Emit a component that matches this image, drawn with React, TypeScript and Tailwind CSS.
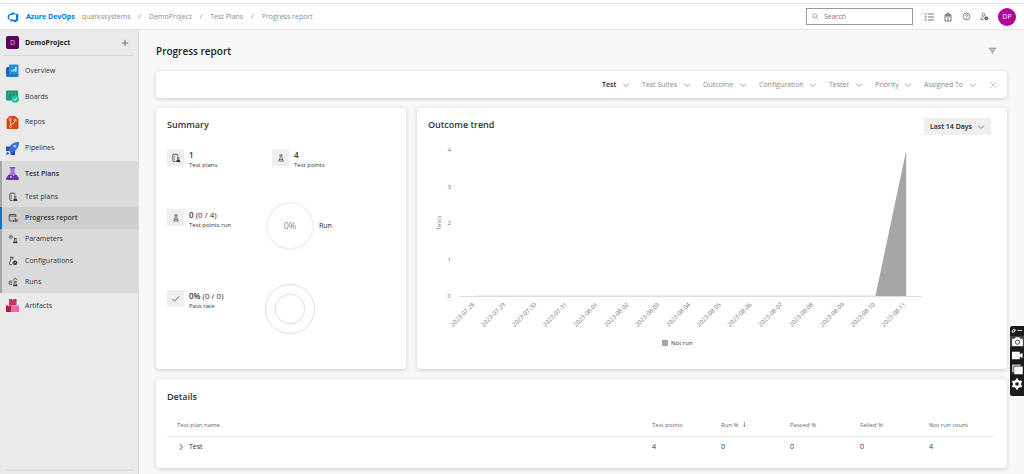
import { useState } from "react";
import type { ReactNode } from "react";

const DATES = [
  "2023-07-28",
  "2023-07-29",
  "2023-07-30",
  "2023-07-31",
  "2023-08-01",
  "2023-08-02",
  "2023-08-03",
  "2023-08-04",
  "2023-08-05",
  "2023-08-06",
  "2023-08-07",
  "2023-08-08",
  "2023-08-09",
  "2023-08-10",
  "2023-08-11",
];
const NOT_RUN = [0, 0, 0, 0, 0, 0, 0, 0, 0, 0, 0, 0, 0, 0, 4];

const FILTERS = ["Test", "Test Suites", "Outcome", "Configuration", "Tester", "Priority", "Assigned To"];

const CARD = "rounded-sm bg-white shadow-[0_1px_4px_rgba(0,0,0,0.18)]";

function Chevron({ className = "" }: { className?: string }) {
  return (
    <svg viewBox="0 0 8 8" className={`size-2 fill-none stroke-current ${className}`} strokeWidth="0.8">
      <path d="M1 2.5 4 5.5 7 2.5" />
    </svg>
  );
}

function Line({ children, className = "size-[10px]" }: { children: ReactNode; className?: string }) {
  return (
    <svg viewBox="0 0 10 10" className={`shrink-0 fill-none stroke-current ${className}`} strokeWidth="0.8">
      {children}
    </svg>
  );
}

function PlanIcon() {
  return (
    <Line>
      <path d="M4.5 8.5H2.6Q1.8 8.5 1.8 7.7V2Q1.8 1.2 2.6 1.2H6Q6.8 1.2 6.8 2V3.2" />
      <path d="M3 3.2h.8M3 5h.8M3 6.8h.8" />
      <path d="M6 4.4h2.4M6.7 4.4v1.8L5.6 8.6h3.4L7.8 6.2V4.4" strokeWidth="0.6" />
      <path d="M6.3 7 5.6 8.6H9L8.2 7z" className="fill-current" strokeWidth="0.6" />
    </Line>
  );
}

function ReportIcon() {
  return (
    <Line>
      <path d="M4.5 8H2Q1.2 8 1.2 7.2V2.2Q1.2 1.4 2 1.4H7Q7.8 1.4 7.8 2.2V4M1.2 3H7.8" />
      <path d="M5.5 9V7M7.2 9V5M8.9 9V6.2" strokeWidth="1" />
    </Line>
  );
}

function ParamsIcon() {
  return (
    <Line>
      <circle cx="2.8" cy="2.8" r="1.7" strokeDasharray="1 0.4" />
      <circle cx="2.8" cy="2.8" r="0.5" />
      <path d="M5.8 4.4h2.8M6.5 4.4v1.8L5.2 8.8h4L8 6.2V4.4" strokeWidth="0.7" />
      <path d="M6 7.4 5.2 8.8h4L8.5 7.4z" className="fill-current stroke-none" />
    </Line>
  );
}

function ConfigIcon() {
  return (
    <Line>
      <path d="M2 1.2h3.5M2.8 1.2v2.3L1.4 7.5Q1.2 8.6 2.2 8.6H4M4.8 1.2v2.3" />
      <circle cx="7" cy="6.8" r="1.9" className="fill-current" />
      <circle cx="7" cy="6.8" r="0.6" className="fill-white stroke-none" />
    </Line>
  );
}

function RunsIcon() {
  return (
    <Line>
      <path d="M4.3 4H2.2Q1 4 1 5.8T2.2 7.6H4M2 5.8H4.4" />
      <path d="M5 3.2 7.2 1.2 9.2 2.6" />
      <path d="M5.8 4.4h2.8M6.5 4.4v1.8L5.2 8.8h4L8 6.2V4.4" strokeWidth="0.7" />
      <path d="M6 7.4 5.2 8.8h4L8.5 7.4z" className="fill-current stroke-none" />
    </Line>
  );
}

function FlaskIcon() {
  return (
    <Line className="size-2">
      <path d="M3 1.2h4M4 1.2v3.3L2 8.8h6L6 4.5V1.2M3 6.8h4" />
    </Line>
  );
}

function Badge({ children }: { children: ReactNode }) {
  return (
    <svg viewBox="0 0 13 13" className="size-[13px] shrink-0">
      {children}
    </svg>
  );
}

const OverviewIcon = (
  <Badge>
    <path d="M1.5 3H10v8q0 2-2 2H2q-2 0-2-2V4.5Q0 3 1.5 3z" fill="#1666b8" />
    <rect x="3" y="0.5" width="9.5" height="10" rx="1" fill="#2490e0" />
    <path d="M5 7.5V6.3h1.5v1.2zM7 7.5V5h1.5v2.5zM9 7.5V3h1.5v4.5z" fill="#cfe8ff" />
    <path d="M0 10h12.5v1.5q0 1.5-1.5 1.5H2q-2 0-2-3z" fill="#1b78c8" />
  </Badge>
);

const BoardsIcon = (
  <Badge>
    <rect x="0" y="0.5" width="12" height="10" rx="1" fill="#1f9476" />
    <path d="M1.5 2h2v2h-2zM5 2h2v2H5zM8.5 2h2v2h-2zM1.5 5.5h2v2h-2zM5 5.5h2v2H5z" fill="#31a685" />
    <circle cx="9.2" cy="9" r="3.8" fill="#1cc4a0" />
    <path d="M7.4 9l1.4 1.4L11 7.8" fill="none" stroke="#fff" />
  </Badge>
);

const ReposIcon = (
  <Badge>
    <path d="M4 0h5l3.5 3v9q0 1-1 1H1.5q-1 0-1-1V3z" fill="#d9480f" />
    <g fill="none" stroke="#ffe3d6" strokeWidth="0.8">
      <path d="M4.5 4.5v5M4.5 8.5Q8.6 8 8.8 5.2" />
      <circle cx="4.3" cy="3.5" r="1" />
      <circle cx="9" cy="4.2" r="1" />
      <circle cx="4.5" cy="10.5" r="1" />
    </g>
  </Badge>
);

const PipelinesIcon = (
  <Badge>
    <path d="M0 4.5h5v4.5H0zM4.5 8H9v5H4.5z" fill="#1f4fc0" />
    <path d="M13 0Q7.5-.2 4 4L2.5 8.5 4.8 10.6 9 9Q13 5.5 13 0z" fill="#3b6fe0" />
    <circle cx="8.8" cy="4.2" r="1.4" fill="#a9c6ff" />
    <path d="M0 13 1.2 9.5 3.7 11.8z" fill="#2b5fd6" />
  </Badge>
);

const TestPlansIcon = (
  <Badge>
    <path d="M4.5 1h4v4.2L12.6 11q.6 2-1.2 2H1.6Q-.2 13 .4 11L4.5 5.2z" fill="#a56fe0" />
    <path d="M2.4 8h8.2l2 3q.6 2-1.2 2H1.6Q-.2 13 .4 11z" fill="#6a2fb0" />
    <rect x="3.6" y="0" width="5.8" height="1.6" rx="0.6" fill="#8a4fd0" />
    <circle cx="5" cy="10" r="1" fill="#d9bdf7" />
    <circle cx="7.5" cy="8.5" r="0.7" fill="#d9bdf7" />
  </Badge>
);

const ArtifactsIcon = (
  <Badge>
    <rect x="3" y="0" width="7.5" height="6.5" fill="#cc2f74" />
    <rect x="0" y="6.5" width="5.5" height="6.5" fill="#b3144f" />
    <rect x="5.5" y="6.5" width="7.5" height="6.5" fill="#ec6aa4" />
    <path d="M8.5 6.5H10v1.8H8.5zM6 0h1.4v1.6H6zM2 6.5h1.4v1.6H2z" fill="#f7a5c8" opacity="0.6" />
  </Badge>
);

const SERVICES = [
  { label: "Overview", icon: OverviewIcon },
  { label: "Boards", icon: BoardsIcon },
  { label: "Repos", icon: ReposIcon },
  { label: "Pipelines", icon: PipelinesIcon },
];

const TEST_PAGES = [
  { label: "Test plans", icon: <PlanIcon /> },
  { label: "Progress report", icon: <ReportIcon />, active: true },
  { label: "Parameters", icon: <ParamsIcon /> },
  { label: "Configurations", icon: <ConfigIcon /> },
  { label: "Runs", icon: <RunsIcon /> },
];

function Header() {
  return (
    <header className="mt-[3px] flex h-[27px] items-center border-t border-b border-[#e4e4e4] bg-white pr-2 pl-[7px]">
      <a href="#" className="flex items-center gap-[7px] font-bold text-[#0078d4]">
        <svg viewBox="0 0 16 16" className="size-3 fill-[#0078d4]">
          <path d="M15 3.6v8.6L11.5 15l-5.4-2v2L3 11l9 .7V4zM12.1 4 7 1v2L2.4 4.4 1 6.2v4.1l2 .9V6.1z" />
        </svg>
        Azure DevOps
      </a>
      <nav className="ml-[7px] flex items-center gap-2 text-[#8a8a8a]">
        <a href="#">quarkssystems</a>
        <span>/</span>
        <a href="#">DemoProject</a>
        <span>/</span>
        <a href="#">Test Plans</a>
        <span>/</span>
        <a href="#">Progress report</a>
      </nav>
      <label className="ml-auto flex h-[17px] w-[107px] items-center gap-[5px] border border-[#999] px-[5px] text-[#666]">
        <Line className="size-[7px]">
          <circle cx="4" cy="4" r="2.8" />
          <path d="M6 6 9.3 9.3" />
        </Line>
        <input type="search" placeholder="Search" aria-label="Search" className="w-full outline-none placeholder:text-[#777]" />
      </label>
      <div className="ml-[11px] flex items-center gap-[9px] text-[#555]">
        <button aria-label="Work items">
          <Line>
            <path d="M4 2h6M4 5h6M4 8h6M.5 2l.8.7L2.8 1M.5 5l.8.7L2.8 4M.5 8l.8.7L2.8 7" />
          </Line>
        </button>
        <button aria-label="Marketplace">
          <Line>
            <path d="M2 3h6v6H2zM3.5 4.8V2Q5 0 6.5 2v2.8M5 1v8" />
          </Line>
        </button>
        <button aria-label="Help">
          <Line className="size-[9px]">
            <circle cx="5" cy="5" r="3.8" />
            <path d="M3.9 4.2Q4 3 5 3t1.1 1.1Q6.1 4.6 5 5.3V6M5 6.6v.8" />
          </Line>
        </button>
        <button aria-label="User settings">
          <Line className="size-[9px]">
            <circle cx="4" cy="2.8" r="1.6" />
            <path d="M4 8.6H1.2Q1 5.2 4 5.2" />
            <circle cx="7" cy="7" r="1.8" className="fill-current" />
            <circle cx="7" cy="7" r="0.6" className="fill-white stroke-none" />
          </Line>
        </button>
        <button className="flex size-[18px] items-center justify-center rounded-full bg-[#b4009e] text-white">DP</button>
      </div>
    </header>
  );
}

function Sidebar() {
  return (
    <aside className="flex w-[139px] shrink-0 flex-col border-r border-[#dcdcdc] bg-[#eaeaea] text-[#333]">
      <div className="mx-[5px] flex h-[26px] items-center border-b border-[#d8d8d8] px-px">
        <span className="flex size-[13px] items-center justify-center rounded-xs bg-[#5c005c] text-[#e8b8e8]">D</span>
        <span className="ml-[6px] font-bold text-[#222]">DemoProject</span>
        <button aria-label="Create" className="mr-[3px] ml-auto">
          <Line className="size-2">
            <path d="M5 1v8M1 5h8" />
          </Line>
        </button>
      </div>
      <nav className="pt-[2px]">
        <ul className="grid h-[103px] grid-rows-4">
          {SERVICES.map((s) => (
            <li key={s.label} className="flex">
              <a href="#" className="flex flex-1 items-center gap-[6px] pl-[6px]">
                {s.icon}
                {s.label}
              </a>
            </li>
          ))}
        </ul>
        <div className="border-l-2 border-[#a6a6a6] bg-[#dadada]">
          <a href="#" className="flex h-[25px] items-center gap-[6px] pl-1 font-semibold">
            {TestPlansIcon}
            Test Plans
          </a>
          <ul className="grid h-[107px] grid-rows-5">
            {TEST_PAGES.map((p) => (
              <li key={p.label} className="flex">
                <a
                  href="#"
                  className={`-ml-0.5 flex flex-1 items-center gap-[7px] border-l-2 pl-[6px] ${
                    p.active ? "border-[#0078d4] bg-[#cdcdcd] font-semibold" : "border-transparent"
                  }`}
                >
                  {p.icon}
                  {p.label}
                </a>
              </li>
            ))}
          </ul>
        </div>
        <a href="#" className="flex h-[25px] items-center gap-[6px] pl-[6px]">
          {ArtifactsIcon}
          Artifacts
        </a>
      </nav>
      <div className="mx-[5px] mt-auto mb-[3px] border-b-2 border-[#e0e0e0]" />
    </aside>
  );
}

function FilterBar() {
  return (
    <div className={`${CARD} flex h-[27px] items-center justify-end gap-3 pr-[10px]`}>
      {FILTERS.map((name, i) => (
        <label key={name} className={`relative flex items-center ${i === 0 ? "font-semibold text-[#222]" : "text-[#888]"}`}>
          <select aria-label={name} className="cursor-pointer appearance-none pr-[13px] outline-none">
            <option>{name}</option>
          </select>
          <Chevron className="pointer-events-none absolute right-0 text-[#888]" />
        </label>
      ))}
      <button aria-label="Clear filters" className="text-[#aaa]">
        <Line className="size-2">
          <path d="M1 1l8 8M9 1 1 9" />
        </Line>
      </button>
    </div>
  );
}

function Stat({ icon, value, detail, label }: { icon: ReactNode; value: string; detail?: string; label: string }) {
  return (
    <div className="flex gap-[5px] text-[#333]">
      <span className="flex size-[17px] items-center justify-center bg-[#efefef]">{icon}</span>
      <div>
        <p className="text-[8px] leading-[11px]">
          <span className="font-semibold">{value}</span> {detail}
        </p>
        <p className="text-[6px] leading-[11px]">{label}</p>
      </div>
    </div>
  );
}

function Summary() {
  return (
    <section className={`${CARD} w-[250px] shrink-0 p-[11px]`}>
      <h2 className="text-[9px] leading-3 font-semibold text-[#333]">Summary</h2>
      <div className="mt-[18px] flex h-[17px]">
        <div className="w-[105px]">
          <Stat icon={<PlanIcon />} value="1" label="Test plans" />
        </div>
        <Stat icon={<FlaskIcon />} value="4" label="Test points" />
      </div>
      <div className="mt-9 flex items-center">
        <div className="w-[99px] pb-3">
          <Stat icon={<FlaskIcon />} value="0" detail="(0 / 4)" label="Test points run" />
        </div>
        <div className="flex size-12 items-center justify-center rounded-full border-2 border-[#f2f2f2] text-[9px] text-[#888]">0%</div>
        <span className="ml-[5px]">Run</span>
      </div>
      <div className="mt-[34px] flex items-center">
        <div className="w-[98px] pb-4">
          <Stat
            icon={
              <Line className="size-[9px]">
                <path d="M1.5 5.5 4 8 8.8 2.6" />
              </Line>
            }
            value="0%"
            detail="(0 / 0)"
            label="Pass rate"
          />
        </div>
        <svg viewBox="0 0 50 50" className="size-[50px] fill-none stroke-[#dcdcdc]">
          <circle cx="25" cy="25" r="24.5" />
          <circle cx="25" cy="25" r="14.8" />
        </svg>
      </div>
    </section>
  );
}

function TrendChart() {
  const x = (i: number) => 47 + i * 30.8;
  const y = (v: number) => 161 - v * 36.4;
  const area = NOT_RUN.map((v, i) => `${x(i)},${y(v)}`).join(" ");

  return (
    <svg viewBox="0 0 568 220" className="block w-full text-[6px]" role="img" aria-label="Outcome trend">
      <g className="fill-[#777]">
        {[0, 1, 2, 3, 4].map((v) => (
          <text key={v} x="23" y={y(v) + 2} textAnchor="end">
            {v}
          </text>
        ))}
        <text transform="translate(13 88) rotate(-90)" textAnchor="middle">
          Tests
        </text>
        {DATES.map((d, i) => (
          <text key={d} transform={`translate(${x(i)} 170) rotate(-45)`} textAnchor="end">
            {d}
          </text>
        ))}
      </g>
      <path d="M31 161.5H494" className="stroke-[#dedede]" />
      <path d="M47 160.5H447" className="stroke-[#ececec]" />
      <polygon points={`${x(0)},${y(0)} ${area} ${x(DATES.length - 1)},${y(0)}`} className="fill-[#a6a6a6]" />
      <rect x="234" y="205" width="6" height="6" className="fill-[#a6a6a6]" />
      <text x="243" y="210" className="fill-[#333]">
        Not run
      </text>
    </svg>
  );
}

function OutcomeTrend() {
  const [range, setRange] = useState("Last 14 Days");

  return (
    <section className={`${CARD} min-w-0 flex-1 px-[11px] pt-[10px] pb-[14px]`}>
      <div className="flex h-[17px] justify-between pr-[5px]">
        <h2 className="text-[9px] leading-[14px] font-semibold text-[#333]">Outcome trend</h2>
        <label className="relative flex items-center bg-[#efefef] font-semibold">
          <select
            aria-label="Period"
            value={range}
            onChange={(e) => setRange(e.target.value)}
            className="h-full cursor-pointer appearance-none pr-[18px] pl-[6px] outline-none"
          >
            <option>Last 14 Days</option>
            <option>Last 7 Days</option>
          </select>
          <Chevron className="pointer-events-none absolute right-[6px] text-[#555]" />
        </label>
      </div>
      <TrendChart />
    </section>
  );
}

function Details() {
  return (
    <section className={`${CARD} px-[11px] pt-3 pb-[10px]`}>
      <h2 className="text-[9px] leading-3 font-semibold text-[#333]">Details</h2>
      <table className="mt-[11px] w-full table-fixed text-left">
        <thead className="text-[#666]">
          <tr className="h-[22px] border-b border-[#eee] text-[6px]">
            <th className="pl-[10px] font-normal">Test plan name</th>
            <th className="w-[69px] font-normal">Test points</th>
            <th className="w-[69px] font-normal">
              <button className="flex items-center gap-[2px]">
                Run %
                <Line className="size-[7px]">
                  <path d="M5 1v7.5M2.5 6 5 8.5 7.5 6" />
                </Line>
              </button>
            </th>
            <th className="w-[70px] font-normal">Passed %</th>
            <th className="w-[69px] font-normal">Failed %</th>
            <th className="w-[67px] font-normal">Not run count</th>
          </tr>
        </thead>
        <tbody className="text-[#333]">
          <tr className="h-[22px]">
            <td className="pl-[10px]">
              <button className="flex items-center gap-1">
                <Chevron className="-rotate-90" />
                Test
              </button>
            </td>
            <td>4</td>
            <td>0</td>
            <td>0</td>
            <td>0</td>
            <td>4</td>
          </tr>
        </tbody>
      </table>
    </section>
  );
}

function RecorderBar() {
  return (
    <div className="fixed top-[326px] right-0 flex w-[14px] flex-col items-center gap-[3px] rounded-l-xs bg-[#1b1b1b] pt-[2px] pb-[6px] text-white">
      <svg viewBox="0 0 12 5" className="h-[5px] w-3 fill-none stroke-white" strokeWidth="0.8">
        <path d="M1 4 1.5 2 3.5 1 4.5 2 3 4zM3 2.5h1M6.5 2.5H11" />
      </svg>
      <button aria-label="Screenshot" className="flex h-[11px] w-full items-center justify-center bg-[#444]">
        <svg viewBox="0 0 12 10" className="h-[9px] w-[11px] fill-white">
          <path d="M1 2h2l1-1.6h4L9 2h2q1 0 1 1v6q0 1-1 1H1q-1 0-1-1V3q0-1 1-1z" />
          <circle cx="6" cy="5.8" r="2.3" className="fill-none stroke-[#333]" />
        </svg>
      </button>
      <button aria-label="Record">
        <svg viewBox="0 0 12 10" className="h-[11px] w-[11px] fill-white">
          <path d="M0 1h8.5v2.8L11.5 2v6L8.5 6.2V9H0z" />
        </svg>
      </button>
      <button aria-label="Gallery">
        <svg viewBox="0 0 12 11" className="h-[11px] w-[11px]">
          <path d="M0 0h9.5v8.5H0z" className="fill-[#bbb]" />
          <path d="M2 2h10v9H2z" className="fill-white stroke-[#1b1b1b]" strokeWidth="0.6" />
        </svg>
      </button>
      <button aria-label="Settings">
        <svg viewBox="0 0 12 12" className="size-3 fill-none stroke-white">
          <circle cx="6" cy="6" r="3" strokeWidth="2.4" />
          <path d="M6 .6v2M6 9.4v2M1.3 3.3l1.8 1M8.9 7.7l1.8 1M1.3 8.7l1.8-1M8.9 4.3l1.8-1" strokeWidth="2.2" />
        </svg>
      </button>
    </div>
  );
}

export default function App() {
  return (
    <div className="flex min-h-screen flex-col bg-white font-['Open_Sans',sans-serif] text-[7px] leading-[10px] text-[#222]">
      <Header />
      <div className="flex flex-1">
        <Sidebar />
        <main className="flex min-w-0 flex-1 flex-col bg-[#f8f8f8] px-[17px] pb-[6px]">
          <div className="flex h-[41px] items-center justify-between pr-[10px]">
            <h1 className="text-[10px] font-semibold">Progress report</h1>
            <button aria-label="Toggle filter" className="text-[#555]">
              <Line className="size-[9px]">
                <path d="M1 2.5h8M2 4.5h6M3.5 6.5h3M4.5 8.2h1" />
              </Line>
            </button>
          </div>
          <FilterBar />
          <div className="mt-[10px] flex gap-[11px]">
            <Summary />
            <OutcomeTrend />
          </div>
          <div className="mt-[10px]">
            <Details />
          </div>
        </main>
      </div>
      <RecorderBar />
    </div>
  );
}
